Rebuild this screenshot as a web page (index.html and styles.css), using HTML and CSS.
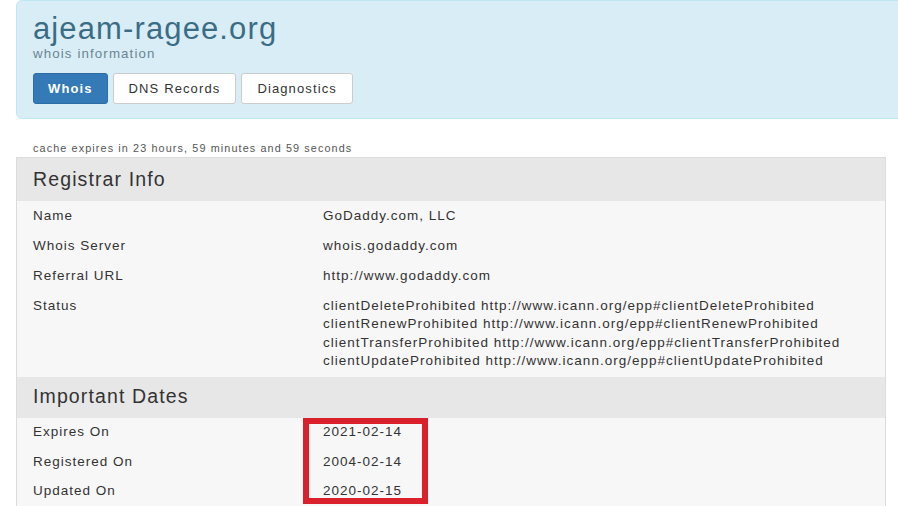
FILE: index.html
```html
<!DOCTYPE html>
<html lang="en">
	<head>
		<meta charset="UTF-8" />
		<meta name="viewport" content="width=device-width, initial-scale=1.0" />
		<title>ajeam-ragee.org whois</title>
		<link rel="stylesheet" href="styles.css">
	</head>
	<body>
		<div class="page">
			<header class="jumbo">
				<h1 class="domain">ajeam-ragee.org</h1>
				<p class="sub">whois information</p>
				<nav class="tabs">
					<a class="btn btn-active" href="#">Whois</a>
					<a class="btn" href="#">DNS Records</a>
					<a class="btn" href="#">Diagnostics</a>
				</nav>
			</header>

			<p class="cache">cache expires in 23 hours, 59 minutes and 59 seconds</p>

			<section class="panel">
				<h2 class="panel-title">Registrar Info</h2>
				<div class="rows">
					<div class="label">Name</div>
					<div class="value">GoDaddy.com, LLC</div>
					<div class="label">Whois Server</div>
					<div class="value">whois.godaddy.com</div>
					<div class="label">Referral URL</div>
					<div class="value">http://www.godaddy.com</div>
					<div class="label">Status</div>
					<div class="value">
						clientDeleteProhibited http://www.icann.org/epp#clientDeleteProhibited<br>
						clientRenewProhibited http://www.icann.org/epp#clientRenewProhibited<br>
						clientTransferProhibited http://www.icann.org/epp#clientTransferProhibited<br>
						clientUpdateProhibited http://www.icann.org/epp#clientUpdateProhibited
					</div>
				</div>

				<h2 class="panel-title panel-title-2">Important Dates</h2>
				<div class="rows dates">
					<div class="label">Expires On</div>
					<div class="value">2021-02-14</div>
					<div class="label">Registered On</div>
					<div class="value">2004-02-14</div>
					<div class="label">Updated On</div>
					<div class="value">2020-02-15</div>
					<!-- red box drawn over the date values -->
					<span class="mark"></span>
				</div>
			</section>
		</div>
	</body>
</html>
```

FILE: styles.css
```css
html,
body {
	margin: 0;
	background: #fff;
	overflow: hidden;
}
body {
	font-family: "Liberation Sans", Arial, sans-serif;
	letter-spacing: 0.07em;
	color: #333;
}
.page {
	width: 870px;
	padding-left: 16px;
}
.jumbo {
	margin-right: -60px;
	padding: 11px 17px 14px 16px;
	background: #d9edf7;
	border: 1px solid #bce8f1;
	border-radius: 6px;
}
.domain {
	margin: 0;
	font-size: 31px;
	font-weight: normal;
	line-height: 34px;
	color: #3a6d85;
}
.sub {
	margin: 0;
	font-size: 13.3px;
	line-height: 16px;
	color: #6a8692;
}
.tabs {
	display: flex;
	gap: 5px;
	margin-top: 11px;
}
.btn {
	display: inline-block;
	padding: 6px 15px;
	font-size: 13px;
	line-height: 17px;
	color: #333;
	text-decoration: none;
	background: #fff;
	border: 1px solid #ccc;
	border-radius: 3px;
}
.btn-active {
	padding: 6px 14px;
	font-weight: bold;
	color: #fff;
	background: #337ab7;
	border-color: #2e6da4;
}
.cache {
	margin: 22px 0 2px 17px;
	font-size: 10.8px;
	line-height: 14px;
	color: #555;
}
.panel {
	background: #f7f7f7;
	border: 1px solid #dcdcdc;
	border-bottom: 0;
}
.panel-title {
	margin: 0;
	padding: 0 16px;
	font-size: 19.5px;
	font-weight: normal;
	line-height: 43px;
	background: #e7e7e7;
	color: #333;
}
.panel-title-2 {
	line-height: 39px;
	padding-bottom: 2px;
}
.rows {
	display: grid;
	grid-template-columns: 289px 1fr;
	font-size: 13.5px;
	line-height: 18.5px;
	letter-spacing: 1px;
}
.label,
.value {
	padding: 5.75px 16px;
}
.value {
	padding-left: 17px;
}
.dates .label,
.dates .value {
	padding: 5.5px 16px;
}
.dates .value {
	padding-left: 17px;
}
.dates {
	position: relative;
}
.mark {
	position: absolute;
	top: 0;
	left: 286px;
	width: 125px;
	height: 86px;
	box-sizing: border-box;
	border: 6px solid #d9202b;
}
```
